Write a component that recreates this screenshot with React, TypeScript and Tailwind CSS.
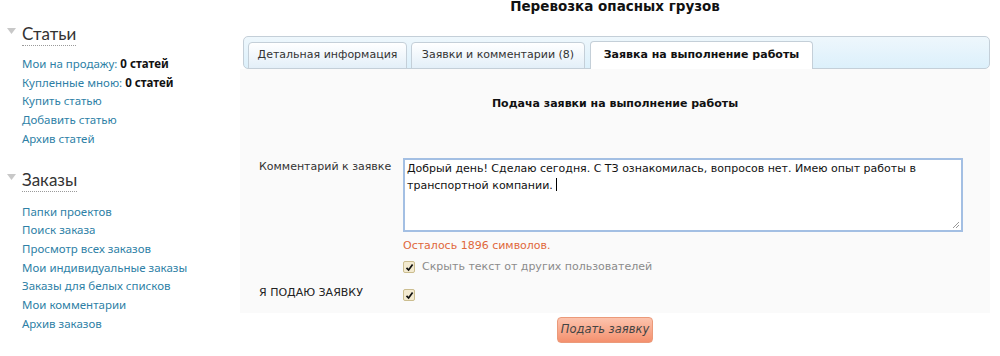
import React from "react";

const Check = () => (
  <span className="inline-flex h-[12px] w-[12px] items-center justify-center rounded-[2px] border border-[#cbbd8f] bg-[#f3ead0]">
    <svg width="9" height="9" viewBox="0 0 9 9">
      <path d="M1.5 4.8 L3.6 7 L7.6 1.6" fill="none" stroke="#111" strokeWidth="1.7" />
    </svg>
  </span>
);

const Heading = ({ children }: { children: React.ReactNode }) => (
  <div className="flex items-center">
    <svg width="10" height="8" viewBox="0 0 10 8" className="ml-[7px] mr-[5px] mt-[-6px]">
      <path d="M0 1 L9 1 L4.5 7 Z" fill="#c8c8c8" />
    </svg>
    <span className="border-b border-dotted border-[#9a9a9a] text-[17px] leading-[23px] text-[#333]" style={{ fontFamily: "Lato, 'Open Sans', sans-serif" }}>
      {children}
    </span>
  </div>
);

const Link = ({ children }: { children: React.ReactNode }) => (
  <div className="text-[11.5px] leading-[18.7px] text-[#2e7fa6]" style={{ fontFamily: "'Noto Sans', 'DejaVu Sans', sans-serif" }}>
    {children}
  </div>
);

export default function App() {
  return (
    <div className="flex h-[356px] w-[1000px] overflow-hidden bg-white" style={{ fontFamily: "'DejaVu Sans', Verdana, sans-serif" }}>
      <aside className="w-[240px] shrink-0 pt-[22px]">
        <Heading>Статьи</Heading>
        <div className="mt-[9px] pl-[22px]">
          <Link>
            Мои на продажу: <b className="text-[#111]">0 статей</b>
          </Link>
          <Link>
            Купленные мною: <b className="text-[#111]">0 статей</b>
          </Link>
          <Link>Купить статью</Link>
          <Link>Добавить статью</Link>
          <Link>Архив статей</Link>
        </div>
        <div className="mt-[19px]">
          <Heading>Заказы</Heading>
        </div>
        <div className="mt-[11px] pl-[22px]">
          <Link>Папки проектов</Link>
          <Link>Поиск заказа</Link>
          <Link>Просмотр всех заказов</Link>
          <Link>Мои индивидуальные заказы</Link>
          <Link>Заказы для белых списков</Link>
          <Link>Мои комментарии</Link>
          <Link>Архив заказов</Link>
        </div>
      </aside>
      <main className="w-[750px] shrink-0">
        <div className="mt-[-3px] text-center text-[13.5px] font-bold leading-[18px] text-[#111]">Перевозка опасных грузов</div>
        <div className="ml-[3px] mt-[21px] flex h-[33px] w-[747px] items-end rounded-[5px] border border-[#c4cfd8] bg-gradient-to-b from-[#eef7fc] to-[#dcf0fb] pl-[4px]">
          <div className="mb-[-1px] mr-[4px] flex h-[27px] w-[159px] items-center justify-center rounded-t-[4px] border border-[#c4cfd8] bg-gradient-to-b from-[#ffffff] to-[#e3eff8] text-[11px] text-[#333]">
            Детальная информация
          </div>
          <div className="mb-[-1px] mr-[5px] flex h-[27px] w-[174px] items-center justify-center rounded-t-[4px] border border-[#c4cfd8] bg-gradient-to-b from-[#ffffff] to-[#e3eff8] text-[11px] text-[#333]">
            Заявки и комментарии (8)
          </div>
          <div className="mb-[-1px] flex h-[28px] w-[223px] items-center justify-center rounded-t-[4px] border border-b-0 border-[#c4cfd8] bg-white text-[11px] font-bold text-[#111]">
            Заявка на выполнение работы
          </div>
        </div>
        <div className="h-[244px] bg-[#fafafa] pt-[27px]">
          <div className="text-center text-[11px] font-bold text-[#111]">Подача заявки на выполнение работы</div>
          <div className="mt-[45px] flex">
            <div className="w-[163px] shrink-0 pl-[19px] pt-[1px] text-[11px] text-[#333]">Комментарий к заявке</div>
            <div>
              <div className="relative h-[74px] w-[560px] border-2 border-[#a3bfe3] bg-white px-[2px] pt-[2px] text-[11px] leading-[14px] text-[#111]">
                Добрый день! Сделаю сегодня. С ТЗ ознакомилась, вопросов нет. Имею опыт работы в транспортной компании. <span className="inline-block h-[13px] w-px translate-y-[2px] bg-black" />
                <svg width="8" height="8" viewBox="0 0 8 8" className="absolute bottom-[1px] right-[1px]">
                  <path d="M7 1 L1 7 M7 4 L4 7" stroke="#999" strokeWidth="1" />
                </svg>
              </div>
              <div className="mt-[6px] text-[11px] text-[#e0683a]">Осталось 1896 символов.</div>
              <div className="mt-[5px] flex items-center gap-[7px]">
                <Check />
                <span className="text-[11px] text-[#8b8b8b]">Скрыть текст от других пользователей</span>
              </div>
            </div>
          </div>
          <div className="mt-[5px] flex items-center">
            <div className="w-[163px] shrink-0 pl-[19px] text-[11px] text-[#222]">Я ПОДАЮ ЗАЯВКУ</div>
            <div className="pt-[2px]">
              <Check />
            </div>
          </div>
        </div>
        <div className="ml-[317px] mt-[4px] flex h-[26px] w-[96px] items-center justify-center rounded-[4px] border border-[#eb9a7a] bg-gradient-to-b from-[#fcc3ad] to-[#f4906e] text-[11.5px] italic text-[#444]">
          Подать заявку
        </div>
      </main>
    </div>
  );
}
